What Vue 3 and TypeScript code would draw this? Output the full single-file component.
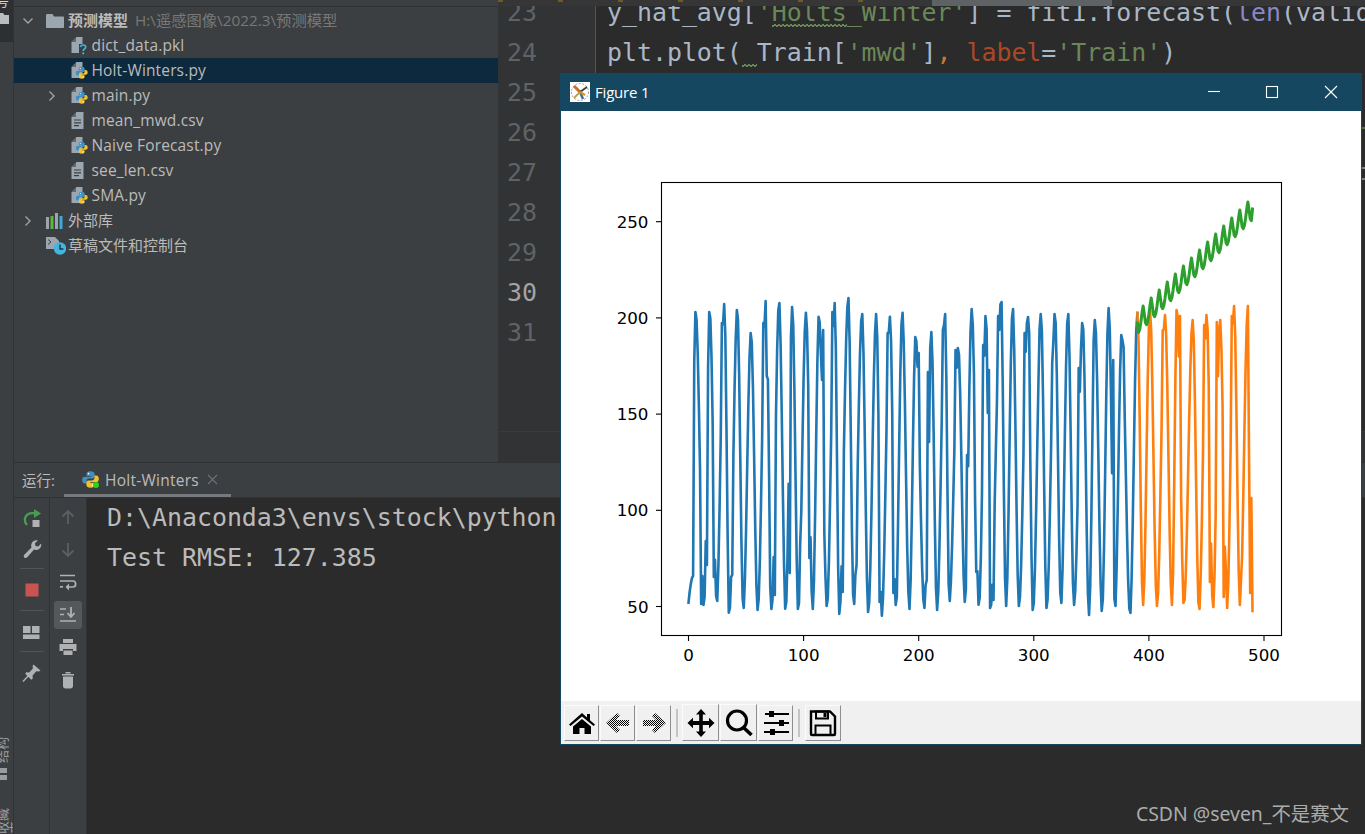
<script setup lang="ts">
type Pt = [number, number]
const X0 = 688.5
const DX = 1.151
const idx = (x: number) => Math.round((x - X0) / DX)

function build(start: number, end: number, ext: Pt[], over: Pt[]): string {
  const ys: Record<number, number> = {}
  for (let i = start; i <= end; i++) {
    const x = X0 + i * DX
    let k = 0
    while (k < ext.length - 2 && x > ext[k + 1][0]) k++
    const a = ext[k]
    const b = ext[k + 1]
    const t = Math.min(1, Math.max(0, (x - a[0]) / (b[0] - a[0])))
    ys[i] = a[1] + ((b[1] - a[1]) * (1 - Math.cos(Math.PI * t))) / 2
  }
  for (const e of ext) {
    const i = idx(e[0])
    if (i >= start && i <= end) ys[i] = e[1]
  }
  for (const o of over) {
    const i = idx(o[0])
    if (i >= start && i <= end) ys[i] = o[1]
  }
  const out: string[] = []
  for (let i = start; i <= end; i++) out.push(`${(X0 + i * DX).toFixed(2)},${ys[i].toFixed(1)}`)
  return out.join(' ')
}

const blueExt: Pt[] = [
  [688.5, 602.7], [695.7, 312], [704, 605], [709.7, 312], [716.7, 601], [724.3, 304], [729.3, 612.7], [737.3, 310],
  [743.3, 608], [751, 333], [757.7, 610], [766, 301], [771.7, 609], [779, 303], [785.7, 608.7], [792.3, 307],
  [798.3, 609], [806, 312.7], [812.7, 609], [819, 316.7], [827, 606], [834.7, 303], [839.3, 614], [848.3, 298],
  [853.7, 604], [862, 314], [868.3, 612], [876.3, 314], [881.7, 615.7], [890, 316.7], [895.7, 605], [902.3, 312.7],
  [909.3, 609], [915.7, 337], [924.3, 608], [931.3, 332], [937, 610], [945, 314], [949.3, 601], [958.3, 348],
  [965, 602], [971.7, 309], [979, 604.7], [986, 316], [990.5, 608], [1001, 302], [1006, 606], [1012.7, 309],
  [1019, 606], [1027.7, 317], [1033, 610], [1041, 314], [1046.7, 608], [1055, 314], [1061, 603], [1068, 314],
  [1074, 605], [1082.7, 323], [1089, 615], [1095, 320], [1102, 611], [1108.7, 308], [1115, 606], [1121.7, 335],
  [1130, 613], [1137.4, 313]
]
const blueOver: Pt[] = [
  [689.7, 592], [690.8, 584], [692, 578], [693.2, 576], [694.4, 362], [700.7, 604], [703, 605], [706.7, 565],
  [714.3, 577], [721.7, 323], [732.7, 575], [753.5, 388], [763.5, 323], [767, 376], [770.7, 587], [774.3, 595],
  [789.3, 573], [800.7, 545], [809.3, 558], [822.3, 380], [823.5, 330],
  [825, 577], [832, 312], [833.3, 326], [842.7, 592], [856.7, 565], [880, 602],
  [887.3, 333], [894, 579], [893, 593], [897.3, 597], [908.3, 592], [918.3, 353], [926.7, 580], [927.8, 372],
  [929, 442], [943.3, 330], [956, 350], [967.3, 455], [975, 502], [976.2, 572], [982.7, 345], [989.3, 370],
  [993, 600], [998.3, 316], [999.5, 330], [1025, 333], [1029, 333], [1039, 329], [1051.7, 363], [1078.3, 368],
  [1093.3, 340], [1113.3, 360], [1123.3, 347]
]
const orangeExt: Pt[] = [
  [1137.4, 313], [1143, 605], [1150, 310], [1157, 606], [1165, 315], [1172, 605], [1177, 310], [1184, 603],
  [1192.7, 320], [1199, 609], [1206.7, 315], [1213, 607], [1220, 320], [1227, 608], [1234, 306], [1240, 605],
  [1248, 306], [1250, 593], [1252.5, 611]
]
const orangeOver: Pt[] = [
  [1162.3, 330], [1180, 316], [1204, 325], [1217.3, 322], [1231.7, 316], [1201.7, 523], [1210, 582], [1226, 573],
  [1223.3, 597], [1241, 581], [1251.2, 498], [1252.5, 611]
]

const blue = build(0, 390, blueExt, blueOver)
const orange = build(390, 490, orangeExt, orangeOver)

const tpl = [0, 9, 19, 22, 20, 14, 6]
const greenPts: string[] = []
for (let i = 390; i <= 490; i++) {
  const d = i - 395
  let y = 306 - (d * 8) / 7 + tpl[((d % 7) + 7) % 7]
  if (i === 390) y = 323
  if (i === 490) y = 209
  greenPts.push(`${(X0 + i * DX).toFixed(2)},${y.toFixed(1)}`)
}
const green = greenPts.join(' ')

const xTicks = [0, 100, 200, 300, 400, 500].map((v) => ({ v, x: X0 + v * DX }))
const yTicks = [50, 100, 150, 200, 250].map((v) => ({ v, y: 606.5 - (v - 50) * 1.924 }))

interface Row {
  name: string
  icon: string
  depth: number
  arrow?: string
  selected?: boolean
  path?: string
  bold?: boolean
}
const rows: Row[] = [
  { name: '预测模型', icon: 'i-folder', depth: 0, arrow: 'down', path: 'H:\\遥感图像\\2022.3\\预测模型', bold: true },
  { name: 'dict_data.pkl', icon: 'i-unknown', depth: 1 },
  { name: 'Holt-Winters.py', icon: 'i-pyfile', depth: 1, selected: true },
  { name: 'main.py', icon: 'i-pyfile', depth: 1, arrow: 'right' },
  { name: 'mean_mwd.csv', icon: 'i-text', depth: 1 },
  { name: 'Naive Forecast.py', icon: 'i-pyfile', depth: 1 },
  { name: 'see_len.csv', icon: 'i-text', depth: 1 },
  { name: 'SMA.py', icon: 'i-pyfile', depth: 1 },
  { name: '外部库', icon: 'i-lib', depth: 0, arrow: 'right' },
  { name: '草稿文件和控制台', icon: 'i-scratch', depth: 0 }
]
const lineNumbers = [23, 24, 25, 26, 27, 28, 29, 30, 31]
</script>

<template>
  <div class="ide">
    <svg class="defs" width="0" height="0">
      <defs>
        <symbol id="i-py" viewBox="0 0 24 24">
          <path fill="#3f8fc5" d="M12 1.5C8 1.5 7 3 7 5v2.6h5.3v1H4.8C2.6 8.600 1.500 10 1.500 12.500s1.100 4.400 3.300 4.400H7v-3c0-1.900 1.500-3.200 3.300-3.200h4.200c1.500 0 2.700-1.200 2.700-2.700V5c0-2-2-3.500-5.200-3.500z" />
          <circle cx="9.500" cy="4.600" r="1" fill="#fff" />
          <path fill="#f2c22e" d="M12 22.500c4 0 5-1.500 5-3.500v-2.600h-5.300v-1h7.500c2.200 0 3.300-1.400 3.300-3.900s-1.100-4.400-3.300-4.400H17v3c0 1.900-1.500 3.200-3.300 3.200H9.500c-1.500 0-2.700 1.200-2.700 2.700V19c0 2 2 3.500 5.200 3.500z" />
          <circle cx="14.500" cy="19.400" r="1" fill="#fff" />
        </symbol>
        <symbol id="i-pyfile" viewBox="0 0 17 19">
          <path fill="#9aa7b0" d="M0.500 6l5-5h6v16H.5z" />
          <path fill="#3c3f41" d="M5 1.500v4.500H.6z" opacity=".6" />
          <use href="#i-py" x="4" y="4.500" width="13.500" height="14.500" />
        </symbol>
        <symbol id="i-unknown" viewBox="0 0 17 19">
          <path fill="#9aa7b0" d="M0.500 6l5-5h6v16H.5z" />
          <path fill="#3c3f41" d="M5 1.500v4.500H.6z" opacity=".6" />
          <path fill="#3c3f41" d="M8 8h9v11H8z" />
          <path fill="none" stroke="#40b6e0" stroke-width="1.700" d="M9.500 11c.3-1.500 1.500-2 2.600-2 1.500 0 2.600.9 2.600 2.100 0 1.700-2.500 1.900-2.500 3.900" />
          <circle cx="12.200" cy="17.300" r="1.100" fill="#40b6e0" />
        </symbol>
        <symbol id="i-text" viewBox="0 0 17 19">
          <path fill="#9aa7b0" d="M0.500 6l5-5h7v17H.5z" />
          <path fill="#3c3f41" d="M5 1.500v4.500H.6z" opacity=".6" />
          <path fill="none" stroke="#3c3f41" stroke-width="1.200" d="M3 9h7M3 11.800h7M3 14.600h5" />
        </symbol>
        <symbol id="i-folder" viewBox="0 0 18 14">
          <path fill="#9aa7b0" d="M0 1.500C0 .7.500 0 1.200 0h5.300l1.500 2.400h9c.6 0 1 .5 1 1V13c0 .6-.4 1-1 1H1c-.6 0-1-.4-1-1z" />
        </symbol>
        <symbol id="i-lib" viewBox="0 0 18 16">
          <path fill="#9aa7b0" d="M0 4h3v12H0z" />
          <path fill="#62b543" d="M4.500 3h3v13h-3z" />
          <path fill="#9aa7b0" d="M9 0h3v16H9z" />
          <path fill="#40a9d8" d="M13.500 3h3v13h-3z" />
        </symbol>
        <symbol id="i-scratch" viewBox="0 0 20 19">
          <path fill="#9aa7b0" d="M0 1h9l4 4v8H0z" />
          <path fill="none" stroke="#3c3f41" stroke-width="1" d="M2 3.500l3 2.500-3 2.500" />
          <circle cx="14" cy="12.500" r="6.200" fill="#40b6e0" />
          <path fill="none" stroke="#26323a" stroke-width="1.400" d="M14 8.500v4.500h3.400" />
        </symbol>
      </defs>
    </svg>

    <aside class="strip">
      <div class="strip-active">
        <span class="strip-top-text">号</span>
        <svg class="strip-folder" width="10" height="11" viewBox="0 0 10 11"><path fill="#b8bcbf" d="M0 0h4l1.500 2H10v9H0z" /></svg>
      </div>
      <div class="strip-fill"></div>
      <span class="strip-vtext">结构</span>
      <svg class="strip-grid" width="9" height="13" viewBox="0 0 9 13"><path fill="#9a9da0" d="M0 0h7v5H0zM0 7h7v5H0z" /></svg>
      <span class="strip-vtext strip-vtext-last">收藏夹</span>
    </aside>

    <div class="main">
      <div class="upper">
        <section class="project">
          <div class="project-head"></div>
          <div class="tree">
            <div v-for="r in rows" :key="r.name" class="row" :class="[`depth-${r.depth}`, { selected: r.selected }]">
              <span class="arrow">
                <svg v-if="r.arrow === 'down'" width="12" height="12" viewBox="0 0 12 12"><path d="M1.500 3.500L6 8l4.500-4.500" fill="none" stroke="#a0a3a5" stroke-width="1.400" /></svg>
                <svg v-if="r.arrow === 'right'" width="12" height="12" viewBox="0 0 12 12"><path d="M3.500 1.500L8 6l-4.500 4.500" fill="none" stroke="#a0a3a5" stroke-width="1.400" /></svg>
              </span>
              <span class="file-icon">
                <svg class="tree-icon" :class="r.icon"><use :href="`#${r.icon}`" /></svg>
              </span>
              <span class="name" :class="{ bold: r.bold }">{{ r.name }}</span>
              <span v-if="r.path" class="path">{{ r.path }}</span>
            </div>
          </div>
        </section>

        <section class="editor">
          <div class="editor-top"><span class="top-mark"></span><span class="top-thumb"></span></div>
          <div class="editor-body">
            <div class="gutter">
              <div v-for="n in lineNumbers" :key="n" class="ln" :class="{ current: n === 30 }">{{ n }}</div>
            </div>
            <div class="code">
              <div class="cl">y_hat_avg[<span class="str">'<span class="squig">Holts</span>_Winter'</span>] = fit1.forecast(<span class="fn">len</span>(valid))</div>
              <div class="cl">plt.plot(<span class="squig">&nbsp;</span>Train[<span class="str">'mwd'</span>]<span class="kw">,</span> <span class="param">label</span>=<span class="str">'Train'</span>)</div>
            </div>
          </div>
          <div class="editor-foot"></div>
        </section>
      </div>

      <section class="run">
        <div class="run-tabs">
          <span class="run-label">运行:</span>
          <div class="run-tab">
            <span class="tab-py">
              <svg width="19" height="19"><use href="#i-py" /></svg>
              <i class="tab-dot"></i>
            </span>
            <span class="tab-name">Holt-Winters</span>
            <svg class="tab-x" width="11" height="11" viewBox="0 0 11 11"><path d="M1 1l9 9M10 1l-9 9" stroke="#6e7174" stroke-width="1.100" /></svg>
          </div>
        </div>
        <div class="run-body">
          <div class="tools tools-a">
            <div class="tool">
              <svg width="20" height="20" viewBox="0 0 20 20"><path d="M5 17c-3-3-3-8 .5-10.500C8 5 11 5 13.500 5.500" fill="none" stroke="#499c54" stroke-width="2.300" /><path d="M12 1l7 4.500-7 4.500z" fill="#499c54" /><path d="M10.500 12h7v7h-7z" fill="#afb1b3" /></svg>
            </div>
            <div class="tool">
              <svg width="20" height="20" viewBox="0 0 20 20"><path d="M2 16l7.500-7.500c-1-2.500 0-5 2-6.500 1.500-1 3-1 4.500-.7l-3 3 .5 2.700 2.700.5 3-3c.3 2-.2 4-1.800 5.300-1.700 1.300-3.700 1.500-5.400.7L5 18.500c-1 .7-2 .5-2.700-.1-.6-.7-.7-1.600-.3-2.400z" fill="#afb1b3" /></svg>
            </div>
            <i class="tool-sep sep1"></i>
            <div class="tool">
              <svg width="14" height="14" viewBox="0 0 14 14"><path d="M.5.500h13v13H.5z" fill="#c75450" /></svg>
            </div>
            <i class="tool-sep sep2"></i>
            <div class="tool">
              <svg width="17" height="14" viewBox="0 0 17 14"><path d="M0 0h7.500v7H0zM9 0h7.500v7H9zM0 8.500h16.500V13H0z" fill="#afb1b3" /></svg>
            </div>
            <i class="tool-sep sep3"></i>
            <div class="tool">
              <svg width="20" height="20" viewBox="0 0 20 20"><path d="M11.500 1.500l7 6-1.700 1-2.500-.2-3.700 4.300.2 3-1.600 1.200-6-6 1-1.500 3 .3 3.700-4.200-.3-2.500z" fill="#afb1b3" /><path d="M7.500 11.500L1 18.500" stroke="#afb1b3" stroke-width="1.500" /></svg>
            </div>
          </div>
          <div class="tools tools-b">
            <div class="tool2">
              <svg width="16" height="16" viewBox="0 0 16 16"><path d="M8 15V2M2.500 7.500L8 2l5.500 5.500" fill="none" stroke="#5c5f61" stroke-width="1.800" /></svg>
            </div>
            <div class="tool2">
              <svg width="16" height="16" viewBox="0 0 16 16"><path d="M8 1v13M2.500 8.500L8 14l5.500-5.500" fill="none" stroke="#5c5f61" stroke-width="1.800" /></svg>
            </div>
            <div class="tool2">
              <svg width="18" height="18" viewBox="0 0 18 18"><path d="M1 2.500h15M1 8h13c3.500 0 3.500 6 0 6h-5" fill="none" stroke="#afb1b3" stroke-width="1.700" /><path d="M1 13.800h3" stroke="#afb1b3" stroke-width="1.700" /><path d="M10 10.500l-3.500 3.500 3.500 3.500z" fill="#afb1b3" /></svg>
            </div>
            <div class="tool2 tool2-on">
              <svg width="18" height="18" viewBox="0 0 18 18"><path d="M1 3h6M1 8.500h4M1 15h16" fill="none" stroke="#afb1b3" stroke-width="1.700" /><path d="M12 1v9M8.500 7l3.500 4 3.500-4" fill="none" stroke="#afb1b3" stroke-width="1.800" /></svg>
            </div>
            <div class="tool2">
              <svg width="18" height="18" viewBox="0 0 18 18"><path d="M4 1h10v4H4zM0.500 6h17v7H14v-2H4v2H.5zM4.500 12.500h9V17h-9z" fill="#afb1b3" /></svg>
            </div>
            <div class="tool2">
              <svg width="14" height="18" viewBox="0 0 14 18"><path d="M1 3h12v1.500H1zM4.500 1h5v1.500h-5zM2 5.500h10V15c0 1.500-1 2.500-2.500 2.500h-5C3 17.500 2 16.500 2 15z" fill="#afb1b3" /></svg>
            </div>
          </div>
          <div class="console">
            <div class="con-line">D:\Anaconda3\envs\stock\python.exe</div>
            <div class="con-line">Test RMSE: 127.385</div>
          </div>
        </div>
      </section>
    </div>

    <div class="marks">
      <i class="mark m1"></i>
      <i class="mark m2"></i>
      <i class="mark m3"></i>
    </div>

    <div class="figure">
      <header class="fig-title">
        <svg class="fig-logo" width="20" height="20" viewBox="0 0 20 20">
          <rect width="20" height="20" fill="#fff" />
          <circle cx="10" cy="10" r="8.500" fill="none" stroke="#888" stroke-width=".8" stroke-dasharray="2 1.500" />
          <path d="M10 10L4 4" stroke="#c8702a" stroke-width="3" />
          <path d="M10 10l3 7" stroke="#3a6f9c" stroke-width="2.500" />
          <path d="M10 10l7-5" stroke="#3d3d3d" stroke-width="1.800" />
          <path d="M10 10l-6 6" stroke="#b9a24a" stroke-width="1.800" />
          <path d="M10 10l5 3" stroke="#d4922a" stroke-width="2.200" />
        </svg>
        <span class="fig-name">Figure 1</span>
        <span class="fig-btns">
          <svg width="58.500" height="36" viewBox="0 0 58.500 36"><path d="M23 17.500h12" stroke="#fff" stroke-width="1.100" /></svg>
          <svg width="58.500" height="36" viewBox="0 0 58.500 36"><rect x="23.500" y="12.500" width="11" height="11" fill="none" stroke="#fff" stroke-width="1.100" /></svg>
          <svg width="58.500" height="36" viewBox="0 0 58.500 36"><path d="M23 12l12 12M35 12L23 24" stroke="#fff" stroke-width="1.100" /></svg>
        </span>
      </header>
      <svg class="plot" width="800" height="590" viewBox="561 111 800 590">
        <polyline :points="blue" class="ln-s" stroke="#1f77b4" />
        <polyline :points="orange" class="ln-s" stroke="#ff7f0e" />
        <polyline :points="green" class="ln-s ln-green" stroke="#2ca02c" />
        <rect x="661.500" y="182.500" width="620" height="453" fill="none" stroke="#000" stroke-width="1.100" />
        <g v-for="t in xTicks" :key="t.v">
          <line :x1="t.x" :x2="t.x" y1="636" y2="641" stroke="#000" stroke-width="1.100" />
          <text :x="t.x" y="661" text-anchor="middle" class="tick">{{ t.v }}</text>
        </g>
        <g v-for="t in yTicks" :key="t.v">
          <line x1="656" x2="661" :y1="t.y" :y2="t.y" stroke="#000" stroke-width="1.100" />
          <text x="648.500" :y="t.y + 6" text-anchor="end" class="tick">{{ t.v }}</text>
        </g>
      </svg>
      <footer class="fig-bar">
        <button class="tb">
          <svg width="28" height="26" viewBox="0 0 28 26"><path d="M14 3L1 14.500l1.500 1.500L14 6.500 25.500 16l1.500-1.500-5-4.300V4h-3v3.500z" fill="#000" /><path d="M5 16.500L14 9l9 7.500V24h-6.500v-6h-5v6H5z" fill="#000" /></svg>
        </button>
        <button class="tb">
          <svg width="28" height="26" viewBox="0 0 28 26"><defs><pattern id="chk" width="2" height="2" patternUnits="userSpaceOnUse"><rect width="1" height="1" fill="#000" /><rect x="1" y="1" width="1" height="1" fill="#000" /></pattern></defs><path d="M13 3L2 13l11 10 3-3-4-4h13V10H12l4-4z" fill="url(#chk)" /></svg>
        </button>
        <button class="tb">
          <svg width="28" height="26" viewBox="0 0 28 26"><path d="M15 3l11 10-11 10-3-3 4-4H3V10h13l-4-4z" fill="url(#chk)" /></svg>
        </button>
        <i class="tb-sep"></i>
        <button class="tb tb-wide">
          <svg width="30" height="30" viewBox="0 0 30 30"><path d="M15 1l5 5.500h-3.200V13H23V9.800l5.500 5.200L23 20.200V17h-6.200v6.500H20L15 29l-5-5.500h3.200V17H7v3.200L1.500 15 7 9.800V13h6.200V6.500H10z" fill="#000" /></svg>
        </button>
        <button class="tb tb-wide">
          <svg width="30" height="30" viewBox="0 0 30 30"><circle cx="13" cy="12.500" r="9.500" fill="none" stroke="#000" stroke-width="3.200" /><path d="M19.500 19.500l8 7.500" stroke="#000" stroke-width="3.600" /></svg>
        </button>
        <button class="tb tb-cfg">
          <svg width="28" height="28" viewBox="0 0 28 28"><path d="M3 5h24M2 14h25M2 23h25" stroke="#000" stroke-width="1.800" /><path d="M7 2h5v6H7zM17 11h5v6h-5zM8 20h5v6H8z" fill="#000" /></svg>
        </button>
        <i class="tb-sep tb-sep2"></i>
        <button class="tb tb-save">
          <svg width="28" height="28" viewBox="0 0 28 28"><path d="M2 2.500h19l5 5V25a1 1 0 0 1-1 1H3a1 1 0 0 1-1-1z" fill="none" stroke="#000" stroke-width="2.400" /><path d="M7 2.500h12v7H7z" fill="none" stroke="#000" stroke-width="2" /><path d="M14.500 4h3v4h-3z" fill="#000" /><path d="M6.500 26v-9.500h15V26" fill="none" stroke="#000" stroke-width="2" /></svg>
        </button>
      </footer>
    </div>

    <div class="watermark">CSDN @seven_不是赛文</div>
  </div>
</template>

<style scoped>
.ide {
  position: relative;
  display: flex;
  width: 1365px;
  height: 834px;
  overflow: hidden;
  background: #2b2b2b;
  font-family: "Open Sans", "Noto Sans CJK SC", sans-serif;
  color: #bbbbbb;
}
.defs {
  position: absolute;
}
.strip {
  display: flex;
  flex-direction: column;
  align-items: flex-start;
  width: 13px;
  flex: none;
  background: #3c3f41;
  border-right: 1px solid #323232;
  overflow: hidden;
}
.strip-active {
  display: flex;
  flex-direction: column;
  width: 13px;
  height: 42px;
  background: #2d2f30;
}
.strip-top-text {
  height: 8px;
  margin-top: -6px;
  margin-left: -4px;
  font-size: 13px;
  line-height: 14px;
  color: #d8d8d8;
}
.strip-folder {
  margin-top: 11px;
  margin-left: -1px;
}
.strip-fill {
  flex: 1;
}
.strip-vtext {
  writing-mode: vertical-rl;
  text-orientation: sideways;
  transform: rotate(180deg);
  margin-left: -4px;
  font-size: 13px;
  line-height: 13px;
  color: #9a9da0;
}
.strip-grid {
  margin: 5px 0 24px;
}
.strip-vtext-last {
  height: 29px;
  overflow: hidden;
}
.main {
  flex: 1;
  display: flex;
  flex-direction: column;
  min-width: 0;
}
.upper {
  display: flex;
  height: 462px;
  flex: none;
}
.project {
  width: 484px;
  flex: none;
  background: #3c3f41;
  font-size: 15.300px;
}
.project-head {
  height: 7px;
  border-bottom: 1px solid #323232;
  box-sizing: border-box;
}
.tree {
  padding-top: 1px;
}
.row {
  display: flex;
  align-items: center;
  height: 25px;
  white-space: nowrap;
  line-height: 25px;
}
.row.selected {
  background: #0d293e;
}
.arrow {
  display: flex;
  align-items: center;
  flex: none;
  box-sizing: border-box;
}
.depth-0 .arrow {
  width: 32px;
  padding-left: 8px;
}
.depth-1 .arrow {
  width: 57px;
  padding-left: 32px;
}
.file-icon {
  display: flex;
  flex: none;
}
.depth-0 .file-icon {
  width: 22px;
}
.depth-1 .file-icon {
  width: 20.500px;
}
.tree-icon {
  width: 17px;
  height: 19px;
}
.tree-icon.i-folder {
  width: 18px;
  height: 14px;
}
.tree-icon.i-lib {
  width: 18px;
  height: 16px;
}
.tree-icon.i-scratch {
  width: 20px;
  height: 19px;
}
.name {
  color: #bbbbbb;
}
.depth-0 .name {
  font-size: 15px;
}
.depth-1 .name {
  font-size: 15.500px;
  letter-spacing: 0.150px;
}
.bold {
  font-weight: 700;
}
.path {
  margin-left: 7px;
  color: #787878;
}
.editor {
  flex: 1;
  display: flex;
  flex-direction: column;
  min-width: 0;
  background: #2b2b2b;
}
.editor-top {
  display: flex;
  height: 6px;
  flex: none;
  background: #363636;
  position: relative;
}
.top-mark {
  width: 420px;
  height: 2px;
  background: repeating-linear-gradient(90deg, #6e5a24 0 5px, transparent 5px 60px);
}
.top-thumb {
  width: 180px;
  height: 6px;
  margin-left: 14px;
  background: #5f6264;
}
.editor-body {
  flex: 1;
  display: flex;
  overflow: hidden;
}
.gutter {
  width: 97px;
  flex: none;
  margin-top: -13px;
  padding-left: 9px;
  box-sizing: border-box;
  background: #313335;
}
.gutter,
.code {
  font-family: "DejaVu Sans Mono", "Liberation Mono", monospace;
  font-size: 24.900px;
  line-height: 40px;
  letter-spacing: -0.010px;
}
.ln {
  height: 40px;
  color: #5f6366;
}
.ln.current {
  color: #a4a3a3;
}
.code {
  flex: 1;
  margin-top: -13px;
  padding-left: 11px;
  border-left: 1px solid #555555;
  white-space: nowrap;
  overflow: hidden;
  color: #a9b7c6;
}
.cl {
  height: 40px;
}
.str {
  color: #6a8759;
}
.fn {
  color: #8888c6;
}
.kw {
  color: #cc7832;
}
.param {
  color: #aa4926;
}
.squig {
  position: relative;
  display: inline-block;
}
.squig::after {
  content: "";
  position: absolute;
  left: 0;
  right: 0;
  top: 31px;
  height: 3px;
  background:
    linear-gradient(135deg, transparent 40%, #6a8759 40%, #6a8759 60%, transparent 60%) 0 0 / 4px 3px repeat-x,
    linear-gradient(45deg, transparent 40%, #6a8759 40%, #6a8759 60%, transparent 60%) 2px 0 / 4px 3px repeat-x;
}
.editor-foot {
  height: 30px;
  flex: none;
  border-top: 1px solid #3a3a3a;
  background: #313335;
}
.run {
  flex: 1;
  display: flex;
  flex-direction: column;
  min-height: 0;
  border-top: 1px solid #323232;
}
.run-tabs {
  display: flex;
  align-items: flex-start;
  height: 34px;
  flex: none;
  background: #3c3f41;
  border-bottom: 1px solid #323232;
}
.run-label {
  margin: 8px 0 0 8px;
  width: 42px;
  font-size: 14.500px;
  line-height: 20px;
}
.run-tab {
  display: flex;
  align-items: center;
  width: 167px;
  height: 34px;
  box-sizing: border-box;
  padding: 2px 0 0 17px;
  border-bottom: 3px solid #747a80;
}
.tab-py {
  position: relative;
  display: flex;
  width: 24px;
  flex: none;
}
.tab-dot {
  position: absolute;
  left: 12px;
  top: 12px;
  width: 6px;
  height: 6px;
  border-radius: 50%;
  background: #22d622;
}
.tab-name {
  font-size: 15.500px;
  letter-spacing: 0.250px;
  width: 101.500px;
  flex: none;
}
.run-body {
  flex: 1;
  display: flex;
  min-height: 0;
}
.tools {
  flex: none;
  display: flex;
  flex-direction: column;
  background: #3c3f41;
  box-sizing: border-box;
}
.tools-a {
  width: 36px;
  align-items: center;
  padding-top: 4px;
  border-right: 1px solid #323232;
}
.tools-b {
  width: 37px;
  align-items: center;
  padding-top: 3px;
  border-right: 1px solid #323232;
}
.tool {
  display: flex;
  align-items: center;
  justify-content: center;
  height: 31px;
  width: 100%;
}
.tool-sep {
  display: block;
  width: 24px;
  height: 1px;
  background: #515355;
}
.sep1 {
  margin: 4px 0 5px;
}
.sep2 {
  margin: 5px 0 6px;
}
.sep3 {
  margin: 3px 0 5px;
}
.tool2 {
  display: flex;
  align-items: center;
  justify-content: center;
  width: 28px;
  height: 32.500px;
}
.tool2-on {
  position: relative;
}
.tool2-on::before {
  content: "";
  position: absolute;
  left: 0;
  right: 0;
  top: 2px;
  bottom: 2px;
  border-radius: 3px;
  background: #55585a;
}
.tool2-on svg {
  position: relative;
}
.console {
  flex: 1;
  padding: 0 0 0 20px;
  background: #2b2b2b;
  font-family: "DejaVu Sans Mono", "Liberation Mono", monospace;
  font-size: 24.900px;
  line-height: 40px;
  color: #bbbbbb;
  white-space: nowrap;
  overflow: hidden;
}
.marks {
  position: absolute;
  left: 1362px;
  top: 0;
}
.mark {
  position: absolute;
  left: 0;
  width: 3px;
  height: 2px;
}
.m1 {
  top: 127px;
  background: #56703f;
}
.m2 {
  top: 167px;
  background: #7f8285;
}
.m3 {
  top: 178px;
  background: #7f8285;
}
.figure {
  position: absolute;
  left: 560px;
  top: 73px;
  display: flex;
  flex-direction: column;
  width: 802px;
  height: 672px;
  box-sizing: border-box;
  border: 1px solid #154761;
  border-top: 0;
  background: #fff;
}
.fig-title {
  display: flex;
  align-items: center;
  height: 38px;
  flex: none;
  background: #154761;
  color: #fff;
}
.fig-logo {
  margin-left: 9px;
}
.fig-name {
  margin-left: 5px;
  font-family: "Open Sans", sans-serif;
  font-size: 15px;
  letter-spacing: -0.200px;
}
.fig-btns {
  display: flex;
  margin-left: auto;
  margin-right: 1px;
}
.plot {
  display: block;
  flex: none;
}
.ln-s {
  fill: none;
  stroke-width: 2.600;
  stroke-linejoin: round;
  stroke-linecap: square;
}
.ln-green {
  stroke-width: 3;
}
.tick {
  font-family: "DejaVu Sans", sans-serif;
  font-size: 16.700px;
  fill: #000;
}
.fig-bar {
  flex: 1;
  display: flex;
  align-items: center;
  padding-left: 3px;
  background: #f0f0f0;
}
.tb {
  display: flex;
  align-items: center;
  justify-content: center;
  flex: none;
  width: 35px;
  height: 36px;
  padding: 0;
  margin-right: 1px;
  box-sizing: border-box;
  background: #f0f0f0;
  border: 1px solid;
  border-color: #fbfbfb #8e8e8e #8e8e8e #fbfbfb;
}
.tb-wide {
  width: 37px;
  height: 37px;
}
.tb-cfg {
  width: 35px;
}
.tb-sep {
  display: block;
  flex: none;
  width: 2px;
  height: 28px;
  margin: 0 4px 0 4px;
  background: #c4c4c4;
}
.tb-sep2 {
  margin: 0 5px 0 4px;
}
.tb-save {
  width: 36px;
}
.watermark {
  position: absolute;
  right: 16px;
  bottom: 8px;
  font-family: "Noto Sans", "Noto Sans CJK SC", sans-serif;
  font-size: 19.400px;
  line-height: 24px;
  color: #ababab;
}
</style>
